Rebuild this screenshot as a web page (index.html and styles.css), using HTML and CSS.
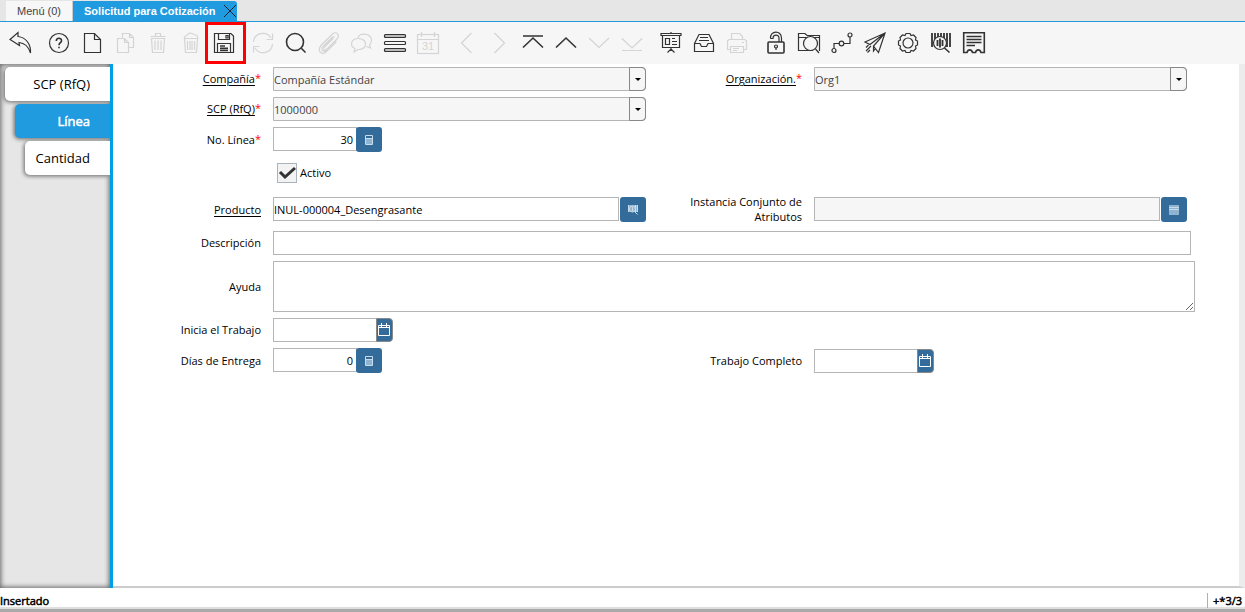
FILE: index.html
```html
<!DOCTYPE html>
<html lang="es">
<head>
    <meta charset="UTF-8">
    <meta name="viewport" content="width=device-width, initial-scale=1.0">
    <title>Solicitud para Cotización</title>
    <link rel="stylesheet" href="styles.css">
</head>
<body>

    <!-- Window tabs -->
    <nav class="window-tabs">
        <a class="window-tab" href="#menu">Menú (0)</a>
        <div class="window-tab active">
            <a href="#solicitud">Solicitud para Cotización</a>
            <button class="close-tab" aria-label="Cerrar">
                <svg viewBox="0 0 14 14"><path d="M1 1L13 13M13 1L1 13"/></svg>
            </button>
        </div>
    </nav>

    <!-- Toolbar -->
    <div class="toolbar">
        <div class="tool-group">
            <button class="tool" aria-label="Deshacer"><svg viewBox="0 0 24 24"><path d="M2 8.5L10 1.5V5.5C18 6.5 23 13 22.5 22C20.5 15.5 17 12 11 11.5L11.5 14.5Z"/></svg></button>
        </div>
        <div class="tool-group">
            <button class="tool" aria-label="Ayuda"><svg viewBox="0 0 24 24"><circle cx="12" cy="12" r="9.5"/><path class="thick" d="M9.3 10C9.3 6.3 14.7 6.5 14.5 9.8C14.3 11.7 12 11.8 12 14.2M12 15.7V17.2"/></svg></button>
            <button class="tool" aria-label="Nuevo"><svg viewBox="0 0 24 24"><path d="M4.5 2.5H14.5L20.5 8.5V21.5H4.5ZM14.5 2.5V8.5H20.5"/></svg></button>
            <button class="tool" aria-label="Copiar" disabled><svg viewBox="0 0 24 24"><path d="M9.5 6.5V2.5H16.5L20.5 6.5V16.5H15.5M16.5 2.5V6.5H20.5M4.5 7.5H11.5L15.5 11.5V21.5H4.5ZM11.5 7.5V11.5H15.5"/></svg></button>
            <button class="tool" aria-label="Borrar" disabled><svg viewBox="0 0 24 24"><path d="M4.5 5.5H19.5M9.5 5.5V2.5H14.5V5.5M5.5 7.5L6.5 21.5H17.5L18.5 7.5ZM9 9.5V19M12 9.5V19M15 9.5V19"/></svg></button>
            <button class="tool" aria-label="Borrar selección" disabled><svg viewBox="0 0 24 24"><path d="M5.5 7.5L6.5 21.5H17.5L18.5 7.5ZM5 7C6 4 8 5 9 3C11 1.5 13 2 15 3.5C17 4 19 5 19 7M8.5 10V19M11 10V19M13 10V19M15.5 10V19"/></svg></button>
            <button class="tool highlighted" aria-label="Guardar"><svg viewBox="0 0 24 24"><path d="M2.5 2.5H19L21.5 5V21.5H2.5ZM6.5 2.5V8.5H17.5V2.5M14 4.5H16V7H14ZM5.5 21V12.5H18.5V21"/><path class="thick" d="M8 15H13M8 17.2H16M8 19.4H16"/></svg></button>
        </div>
        <div class="tool-group">
            <button class="tool" aria-label="Refrescar" disabled><svg viewBox="0 0 24 24"><path d="M2.5 11C3 2 15 -1 20 7M21.5 2.5V8.5H15.5M21.5 13C21 22 9 25 4 17M2.5 21.5V15.5H8.5"/></svg></button>
            <button class="tool" aria-label="Buscar"><svg viewBox="0 0 24 24"><circle class="thick" cx="11" cy="11" r="8.5"/><path class="thick" d="M17.3 17.3L21.5 21.5"/></svg></button>
            <button class="tool" aria-label="Adjunto" disabled><svg viewBox="0 0 24 24"><path d="M16.5 7L7.5 16C5.5 18.5 8 20 9.5 18.5L20 8C23.5 4 19 -.5 15.5 3L4 14.5C-.5 20 5 24.5 9 21L19.5 10.5M17.5 6C16.5 5 15.5 6 14.5 7L6 15.5C2.5 19 7 22 10 19"/></svg></button>
            <button class="tool" aria-label="Chat" disabled><svg viewBox="0 0 24 24"><path d="M8 7C9 1 21 2 21.5 9C21.5 12 20.5 13 19.5 14L20.5 17L16.5 15.5M8.5 7.5C0 7.5 0 16 5 17.5L4 21L8 18.5C18 19 18 7.5 8.5 7.5Z"/></svg></button>
            <button class="tool" aria-label="Cuadrícula"><svg viewBox="0 0 24 24"><rect class="shade" x="1.5" y="3.5" width="21" height="3" rx="1"/><rect x="1.5" y="10.5" width="21" height="3" rx="1"/><rect class="shade" x="1.5" y="17.5" width="21" height="3" rx="1"/></svg></button>
            <button class="tool" aria-label="Calendario" disabled><svg viewBox="0 0 24 24"><rect x="1.5" y="3.5" width="21" height="19"/><path d="M1.5 8.5H22.5M5.5 1V6M18.5 1V6"/><text x="12" y="19">31</text></svg></button>
        </div>
        <div class="tool-group">
            <button class="tool" aria-label="Registro padre" disabled><svg viewBox="0 0 24 24"><path d="M16.5 2L6.5 12L16.5 22"/></svg></button>
            <button class="tool" aria-label="Registro detalle" disabled><svg viewBox="0 0 24 24"><path d="M6.5 2L16.5 12L6.5 22"/></svg></button>
            <button class="tool" aria-label="Primer registro"><svg viewBox="0 0 24 24"><path class="thick" d="M2 5H22M2 16.5L12 7L22 16.5"/></svg></button>
            <button class="tool" aria-label="Registro anterior"><svg viewBox="0 0 24 24"><path class="thick" d="M2 16.5L12 7L22 16.5"/></svg></button>
            <button class="tool" aria-label="Registro siguiente" disabled><svg viewBox="0 0 24 24"><path d="M2 7L12 16.5L22 7"/></svg></button>
            <button class="tool" aria-label="Último registro" disabled><svg viewBox="0 0 24 24"><path d="M2 7.5L12 17L22 7.5M2 19.5H22"/></svg></button>
        </div>
        <div class="tool-group">
            <button class="tool" aria-label="Informe"><svg viewBox="0 0 24 24"><path d="M2 2.5H22V4.5H2ZM3.5 4.5V16.5H20.5V4.5M6.5 7.5H10.5V13.5H6.5ZM13 7.5H16M13 10.5H18M13 13.5H18M12 17V20M8.5 21.5L12 18L15.5 21.5M12 1V2"/></svg></button>
            <button class="tool" aria-label="Archivo"><svg viewBox="0 0 24 24"><path d="M2.5 12.5L7 3.5H17L21.5 12.5V20.5H2.5ZM2.5 12.5H8L9.5 15.5H14.5L16 12.5H21.5M8 6.5H16M7 9.5H17"/></svg></button>
            <button class="tool" aria-label="Imprimir" disabled><svg viewBox="0 0 24 24"><path d="M6.5 8V2.5H14.5L17.5 5.5V8M5.5 18.5H2.5V10L4 8.5H20L21.5 10V18.5H18.5M5.5 15.5H18.5V21.5H5.5ZM8 17.5H14M8 19.5H12M17 11.5H19"/></svg></button>
        </div>
        <div class="tool-group">
            <button class="tool" aria-label="Bloquear"><svg viewBox="0 0 24 24"><rect class="thick" x="4" y="11" width="16" height="11" rx="1"/><path d="M6.5 7.5C6 -1 17.5 -1 17.5 7V11M6.5 7.5H9C9 3 15 3 15 7V11M12 16.5V19"/><circle cx="12" cy="15.5" r="1.5"/></svg></button>
            <button class="tool" aria-label="Zoom"><svg viewBox="0 0 24 24"><path d="M16 19.5H1.5V2.5H8L10 4.5H22.5V20M1.5 6.5H22.5M18.5 18L22 22"/><circle class="lens" cx="13.5" cy="12.5" r="7"/></svg></button>
            <button class="tool" aria-label="Flujo de trabajo"><svg viewBox="0 0 24 24"><path d="M4 17.5V12.5H9M14 12.5H20V6"/><circle cx="4" cy="19.5" r="2"/><circle cx="11.5" cy="12.5" r="2.3"/><circle cx="20" cy="4" r="2"/></svg></button>
            <button class="tool" aria-label="Solicitud"><svg viewBox="0 0 24 24"><path d="M2 11L22 2L15.5 21.5L10.5 15L22 2L7 13.5ZM10.5 15V20L12.5 17.5M8 15L3 20M7 19L4.5 21.5M5.5 14L3 16.5"/></svg></button>
            <button class="tool" aria-label="Proceso"><svg viewBox="0 0 24 24"><path d="M10 2.5H14L15 4.5L17.5 4L20 6.5L19.5 9L21.5 10V14L19.5 15L20 17.5L17.5 20L15 19.5L14 21.5H10L9 19.5L6.5 20L4 17.5L4.5 15L2.5 14V10L4.5 9L4 6.5L6.5 4L9 4.5Z"/><circle cx="12" cy="12" r="5"/></svg></button>
            <button class="tool" aria-label="Información de producto"><svg viewBox="0 0 24 24"><path class="bars" d="M3 2V16M6 2V16M9 2V8M12 2V8M15 2V8M18 2V16M21 2V16"/><circle class="lens" cx="11" cy="12" r="6.5"/><path class="bars" d="M8.5 9V15M11 7.5V16.5M13.5 9V15"/><path class="thick" d="M15.5 17L20.5 21.5"/></svg></button>
            <button class="tool" aria-label="Personalizar"><svg viewBox="0 0 24 24"><path class="thick" d="M1.7 1.7H22.3V21.5H19C18 18 14.5 18 13.5 21.5H10.5C9.5 18 6 18 5 21.5H1.7ZM4.5 5.5H19.5M4.5 8.5H19.5M4.5 11.5H19.5M4.5 14.5H13"/></svg></button>
        </div>
    </div>

    <div class="workspace">

        <!-- Record tabs -->
        <aside class="record-tabs">
            <a class="record-tab" href="#rfq">SCP (RfQ)</a>
            <a class="record-tab level-1 active" href="#linea">Línea</a>
            <a class="record-tab level-2" href="#cantidad">Cantidad</a>
        </aside>

        <main class="panel">
            <form class="form">
                <label for="company"><u>Compañía</u><sup>*</sup></label>
                <div class="field">
                    <div class="combo"><select id="company"><option>Compañía Estándar</option></select></div>
                </div>
                <label for="org"><u>Organización.</u><sup>*</sup></label>
                <div class="field">
                    <div class="combo"><select id="org"><option>Org1</option></select></div>
                </div>

                <label class="first" for="rfq"><u>SCP (RfQ)</u><sup>*</sup></label>
                <div class="field">
                    <div class="combo"><select id="rfq"><option>1000000</option></select></div>
                </div>

                <label class="first" for="lineNo">No. Línea<sup>*</sup></label>
                <div class="field">
                    <input class="number" type="text" id="lineNo" value="30">
                    <button type="button" class="picker joined" aria-label="Calculadora"><svg viewBox="0 0 10 12"><path d="M1.5 1.5H8.5V10.5H1.5ZM1.5 4.5H8.5"/><path class="fill" d="M2 5H8V10H2Z"/></svg></button>
                </div>

                <div class="field check-field">
                    <input type="checkbox" id="active" checked>
                    <label for="active">Activo</label>
                </div>

                <label class="first" for="product"><u>Producto</u></label>
                <div class="field">
                    <input type="text" id="product" value="INUL-000004_Desengrasante">
                    <button type="button" class="picker" aria-label="Buscar producto"><svg viewBox="0 0 10 12"><path class="fill" d="M0 1H10V8H0Z"/><path d="M.5 1V8M7.5 1V8M9.5 1V8M4.5 3V7M7 8L9.5 10.5"/><circle cx="4.5" cy="5" r="3"/></svg></button>
                </div>
                <label for="attributes">Instancia Conjunto de Atributos</label>
                <div class="field">
                    <input type="text" id="attributes" readonly>
                    <button type="button" class="picker" aria-label="Atributos"><svg viewBox="0 0 10 12"><path class="fill" d="M0 1H10V11H0Z"/><path d="M0 3.5H10M0 5.5H10"/></svg></button>
                </div>

                <label class="first" for="description">Descripción</label>
                <div class="field wide">
                    <input type="text" id="description">
                </div>

                <label class="first" for="help">Ayuda</label>
                <div class="field full">
                    <textarea id="help"></textarea>
                </div>

                <label class="first" for="workStart">Inicia el Trabajo</label>
                <div class="field">
                    <input class="date" type="text" id="workStart">
                    <button type="button" class="date-button" aria-label="Elegir fecha"><svg viewBox="0 0 14 14"><path d="M.5 2.5H11.5V12.5H.5ZM.5 4.5H11.5M3.5 0V4M8.5 0V4"/></svg></button>
                </div>

                <label class="first" for="deliveryDays">Días de Entrega</label>
                <div class="field">
                    <input class="number" type="text" id="deliveryDays" value="0">
                    <button type="button" class="picker joined" aria-label="Calculadora"><svg viewBox="0 0 10 12"><path d="M1.5 1.5H8.5V10.5H1.5ZM1.5 4.5H8.5"/><path class="fill" d="M2 5H8V10H2Z"/></svg></button>
                </div>
                <label for="workComplete">Trabajo Completo</label>
                <div class="field">
                    <input class="date" type="text" id="workComplete">
                    <button type="button" class="date-button" aria-label="Elegir fecha"><svg viewBox="0 0 14 14"><path d="M.5 2.5H11.5V12.5H.5ZM.5 4.5H11.5M3.5 0V4M8.5 0V4"/></svg></button>
                </div>
            </form>
        </main>
    </div>

    <!-- Status bar -->
    <footer class="status-bar">
        <span>Insertado</span>
        <span class="record-count">+*3/3</span>
    </footer>

</body>
</html>
```
FILE: styles.css
```css
*, *::before, *::after {
    box-sizing: border-box;
}
body {
    margin: 0;
    height: 100vh;
    display: flex;
    flex-direction: column;
    overflow: hidden;
    font-family: "Open Sans", "Noto Sans", sans-serif;
    font-size: 11px;
    color: #000;
    background-color: #fff;
}
a {
    color: inherit;
    text-decoration: none;
}
button, input, select, textarea {
    margin: 0;
    font-family: inherit;
    font-size: inherit;
    color: inherit;
}
button {
    padding: 0;
    border: none;
    background: none;
    cursor: pointer;
}
svg {
    display: block;
    fill: none;
    stroke: currentColor;
}

/* Window tabs */
.window-tabs {
    display: flex;
    height: 22px;
    padding: 1px 6px 0;
    background-color: #e6e6e6;
    border-bottom: 1px solid #2599d8;
    font-family: "Liberation Sans", Arial, sans-serif;
}
.window-tab {
    display: flex;
    align-items: center;
    padding: 0 11px;
    background-color: #f7f7f7;
    border-right: 1px solid #ccc;
    color: #444;
}
.window-tab.active {
    padding: 0 0 0 11px;
    gap: 8px;
    border: none;
    border-radius: 0 3px 0 0;
    background-color: #219bdf;
    color: #fff;
    font-weight: bold;
}
.close-tab svg {
    width: 14px;
    height: 14px;
    stroke: #123;
}

/* Toolbar */
.toolbar {
    display: flex;
    gap: 6px;
    height: 42px;
    padding: 0 3px;
    background-color: #f6f6f6;
}
.tool-group {
    display: flex;
}
.tool {
    position: relative;
    display: flex;
    align-items: center;
    justify-content: center;
    width: 33px;
    color: #333;
}
.tool svg {
    width: 24px;
    height: 24px;
    stroke-width: 1.2;
}
.tool:disabled {
    color: #d4d4d4;
    cursor: default;
}
.tool .thick {
    stroke-width: 1.6;
}
.tool .bars {
    stroke-width: 1.8;
}
.tool .shade {
    fill: #bbb;
}
.tool .lens {
    fill: #f6f6f6;
}
.tool text {
    fill: currentColor;
    stroke: none;
    font: 11px "Liberation Sans", Arial, sans-serif;
    text-anchor: middle;
}
.highlighted::after {
    content: "";
    position: absolute;
    inset: 0 -6px 0 -2px;
    border: 3px solid #f00;
}

/* Record tabs */
.workspace {
    flex: 1;
    display: flex;
    min-height: 0;
}
.record-tabs {
    display: flex;
    flex-direction: column;
    gap: 3px;
    width: 113px;
    padding: 3px 0 0 5px;
    background-color: #e6e6e6;
    border-right: 3px solid #009fe3;
    box-shadow: inset 0 0 5px 1px #666;
}
.record-tab {
    display: flex;
    align-items: center;
    justify-content: flex-end;
    height: 34px;
    padding-right: 20px;
    border-radius: 5px 0 0 5px;
    background-color: #fff;
    box-shadow: -1px 1px 4px #666;
    font-size: 13px;
    clip-path: inset(-5px 0 -5px -5px);
}
.level-1 {
    margin-left: 10px;
}
.level-2 {
    margin-left: 20px;
}
.record-tab.active {
    background-color: #219bdf;
    color: #fff;
    -webkit-text-stroke: 0.5px;
}

/* Form */
.panel {
    flex: 1;
    border-right: 6px solid #ececec;
    border-bottom: 2px solid #ccc;
}
.form {
    display: grid;
    grid-template-columns: 148px 1fr 136px 1fr;
    gap: 6px 12px;
    align-items: center;
    padding: 3px 44px 0 0;
}
.form label {
    padding-bottom: 1px;
    line-height: 15px;
    text-align: right;
}
.form .first {
    grid-column: 1;
}
.form sup {
    color: #f00;
    font-size: 11px;
    line-height: 0;
    vertical-align: 1px;
}
.form u {
    text-underline-offset: 2px;
}
.field {
    display: flex;
    gap: 1px;
    padding-right: 8px;
}
.wide {
    grid-column: 2 / 5;
    padding-right: 4px;
}
.full {
    grid-column: 2 / 5;
    padding-right: 0;
}
.field input[type="text"], .field select, .field textarea {
    flex: 1;
    min-width: 0;
    height: 24px;
    padding: 1px 1px 0 0;
    border: 1px solid #b5b5b5;
    border-radius: 0;
    outline: none;
    background-color: #fff;
}
.field textarea {
    height: 51px;
}
.field input[readonly] {
    background-color: #f6f6f6;
}
.field input.number {
    flex: none;
    width: 84px;
    padding-right: 3px;
    text-align: right;
}
.field input.date {
    flex: none;
    width: 104px;
}

/* Combo boxes */
.combo {
    position: relative;
    flex: 1;
    display: flex;
}
.field .combo select {
    appearance: none;
    background-color: #f6f6f6;
    border-radius: 0 4px 4px 0;
    color: #444;
}
.combo::before {
    content: "";
    position: absolute;
    top: 0;
    right: 0;
    width: 17px;
    height: 24px;
    border: 1px solid #888;
    border-radius: 0 4px 4px 0;
    pointer-events: none;
}
.combo::after {
    content: "";
    position: absolute;
    right: 5px;
    top: 11px;
    border: 3px solid transparent;
    border-top-color: #000;
    border-bottom: none;
    pointer-events: none;
}

/* Buttons next to a field */
.picker {
    display: flex;
    align-items: center;
    justify-content: center;
    width: 26px;
    height: 25px;
    border-radius: 3px;
    background-color: #336b9b;
    color: #c8dcec;
}
.picker svg {
    width: 10px;
    height: 12px;
}
.picker .fill {
    fill: #8fb4d2;
    stroke: none;
}
.joined {
    margin-left: -2px;
}
.date-button {
    display: flex;
    align-items: center;
    justify-content: center;
    width: 17px;
    height: 24px;
    margin-left: -2px;
    border: 1px solid #888;
    border-radius: 0 4px 4px 0;
    background-color: #336b9b;
    color: #fff;
}
.date-button svg {
    flex: none;
    width: 14px;
    height: 14px;
}

/* Checkbox */
.check-field {
    grid-column: 2;
    align-items: center;
    gap: 3px;
    height: 30px;
    padding-left: 4px;
}
.check-field input {
    appearance: none;
    width: 20px;
    height: 20px;
    border: 1px solid #aab4bc;
    background-color: #f3f3f3;
}
.check-field input:checked {
    background-image: url("data:image/svg+xml,%3Csvg xmlns='http://www.w3.org/2000/svg' viewBox='0 0 18 18'%3E%3Cpath d='M2 8L7 13L17 4' fill='none' stroke='%23333' stroke-width='3'/%3E%3C/svg%3E");
}

/* Status bar */
.status-bar {
    display: flex;
    justify-content: space-between;
    align-items: center;
    height: 24px;
    padding: 4px 3px 0 0;
    border-bottom: 3px solid #aaa;
    box-shadow: inset 0 -2px 1px #ddd;
    color: #000;
    -webkit-text-stroke: 0.5px;
}
.record-count {
    padding-left: 5px;
    border-left: 1px solid #9ab0ee;
}
```
